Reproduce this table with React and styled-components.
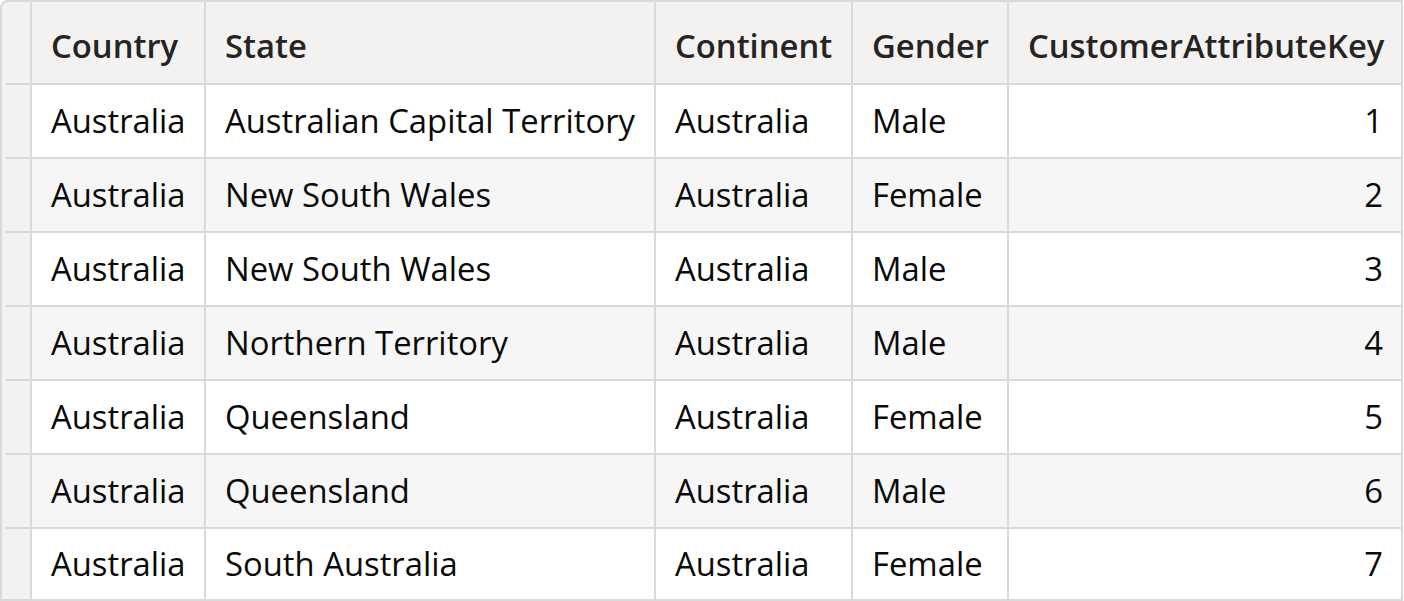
import React from "react";
import styled, { createGlobalStyle } from "styled-components";

const GlobalStyle = createGlobalStyle`
  html, body { margin: 0; padding: 0; background: #ffffff; }
  body { font-family: "Open Sans", "Noto Sans", sans-serif; }
`;

const LINE = "#d9d9d9";

const Frame = styled.div`
  width: 1403px;
  height: 601px;
  box-sizing: border-box;
  border: 2px solid ${LINE};
  border-top-left-radius: 8px;
  overflow: hidden;
  background: ${LINE};
`;

const Grid = styled.div`
  display: grid;
  grid-template-columns: 28px 172px 448px 195px 154px 1fr;
  grid-template-rows: 81px repeat(6, 72px) 70px;
  gap: 2px;
  background: ${LINE};
`;

const Cell = styled.div`
  display: flex;
  align-items: center;
  justify-content: ${(p) => (p.$align === "right" ? "flex-end" : "flex-start")};
  padding: 0 18px 0 19px;
  font-size: 32.8px;
  line-height: 1;
  color: #0a0a0a;
  white-space: nowrap;
  overflow: hidden;
  background: ${(p) => (p.$striped ? "#f6f6f6" : "#ffffff")};
`;

const HeaderCell = styled(Cell)`
  padding-top: 8px;
  background: #f3f2f1;
  font-weight: 600;
  color: #252423;
`;

const RowHeader = styled.div`
  position: relative;
  background: #f3f2f1;
  &::after {
    content: "";
    position: absolute;
    left: 0;
    bottom: -2px;
    width: 4px;
    height: 2px;
    background: #f3f2f1;
  }
`;

const columns = [
  { key: "country", label: "Country" },
  { key: "state", label: "State" },
  { key: "continent", label: "Continent" },
  { key: "gender", label: "Gender" },
  { key: "id", label: "CustomerAttributeKey", align: "right" },
];

const rows = [
  { country: "Australia", state: "Australian Capital Territory", continent: "Australia", gender: "Male", id: 1 },
  { country: "Australia", state: "New South Wales", continent: "Australia", gender: "Female", id: 2 },
  { country: "Australia", state: "New South Wales", continent: "Australia", gender: "Male", id: 3 },
  { country: "Australia", state: "Northern Territory", continent: "Australia", gender: "Male", id: 4 },
  { country: "Australia", state: "Queensland", continent: "Australia", gender: "Female", id: 5 },
  { country: "Australia", state: "Queensland", continent: "Australia", gender: "Male", id: 6 },
  { country: "Australia", state: "South Australia", continent: "Australia", gender: "Female", id: 7 },
];

export default function App() {
  return (
    <>
      <GlobalStyle />
      <Frame>
        <Grid>
          <RowHeader />
          {columns.map((c) => (
            <HeaderCell key={c.key}>{c.label}</HeaderCell>
          ))}
          {rows.map((r, i) => (
            <React.Fragment key={r.id}>
              <RowHeader />
              {columns.map((c) => (
                <Cell key={c.key} $align={c.align} $striped={i % 2 === 1}>
                  {r[c.key]}
                </Cell>
              ))}
            </React.Fragment>
          ))}
        </Grid>
      </Frame>
    </>
  );
}
